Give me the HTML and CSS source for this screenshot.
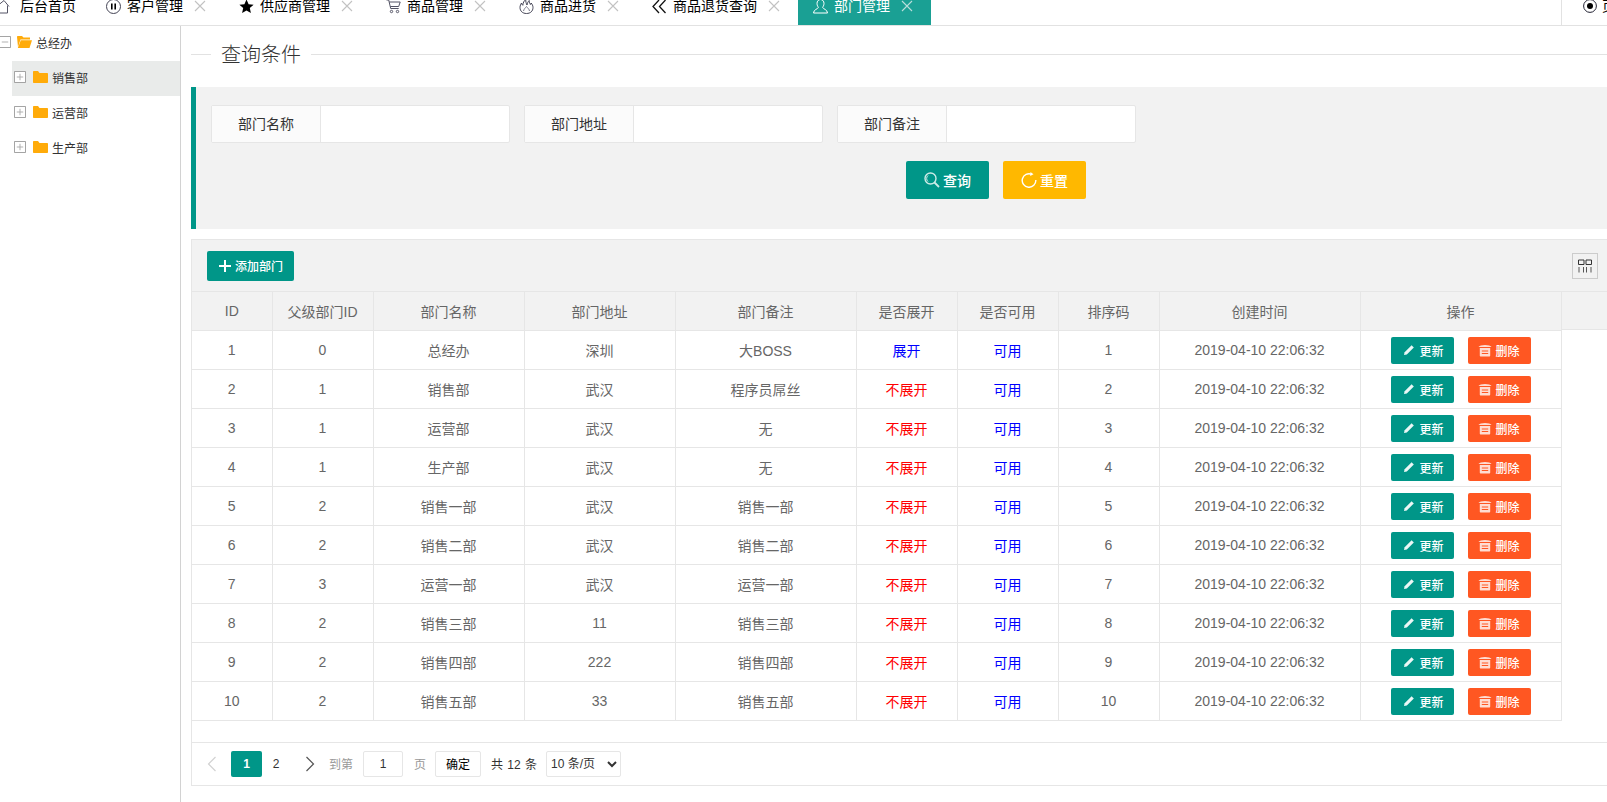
FILE: index.html
```html
<!DOCTYPE html>
<html lang="zh-CN">
<head>
<meta charset="utf-8">
<title>部门管理</title>
<link rel="stylesheet" href="styles.css">
</head>
<body>
<svg class="defs" width="0" height="0">
  <symbol id="i-x" viewBox="0 0 16 16"><path d="M3 3l10 10M13 3L3 13" fill="none" stroke="currentColor" stroke-width="1.1"/></symbol>
  <symbol id="i-edit" viewBox="0 0 12 12"><path d="M1 11l.6-2.800L8.600 1.200l2.200 2.200-7 7z" fill="currentColor" opacity=".92"/></symbol>
  <symbol id="i-trash" viewBox="0 0 14 14"><path d="M.5 4C1.500 1.300 12.500 1.300 13.500 4z" fill="currentColor" opacity=".8"/><path d="M1.800 5h10.400v7.500c0 .6-.4 1-1 1H2.800c-.6 0-1-.4-1-1zM3.800 7.500v1h6.400v-1zM3.800 10v1h6.400v-1z" fill="currentColor" fill-rule="evenodd" opacity=".8"/></symbol>
  <symbol id="i-folder" viewBox="0 0 15 12"><path d="M0 1c0-.6.4-1 1-1h4l1.500 2H14c.6 0 1 .4 1 1v8c0 .6-.4 1-1 1H1c-.6 0-1-.4-1-1z" fill="#ffab0a"/></symbol>
  <symbol id="i-plus" viewBox="0 0 13 13"><path d="M.5.500h12v12H.5z" fill="#fff" stroke="#999"/><path d="M3 6.500h7M6.500 3v7" stroke="#aaa"/></symbol>
</svg>

<header class="tabs">
  <nav class="tab-list">
    <a class="tab tab-home"><svg class="tab-icon" viewBox="0 0 15 14"><path d="M1 7.500L9 1l5 6M3.500 6v7.500h9V6" fill="none" stroke="#556"/></svg><span>后台首页</span></a>
    <a class="tab"><svg class="tab-icon" viewBox="0 0 15 15"><circle cx="7.500" cy="7.500" r="7" fill="none" stroke="#445"/><path d="M5.800 4.500v6M9.200 4.500v6" stroke="#000" stroke-width="1.600"/></svg><span>客户管理</span><svg class="tab-x"><use href="#i-x"/></svg></a>
    <a class="tab"><svg class="tab-icon" viewBox="0 0 15 15"><path d="M7.500.500l2.100 4.700 5 .5-3.800 3.400 1.100 5-4.400-2.600-4.400 2.600 1.100-5L.400 5.700l5-.5z" fill="#000"/></svg><span>供应商管理</span><svg class="tab-x"><use href="#i-x"/></svg></a>
    <a class="tab"><svg class="tab-icon" viewBox="0 0 15 15"><path d="M.5 1h2.200l2 8.500h8M3.200 3h11l-1.500 4.500H4.300" fill="none" stroke="#556"/><circle cx="5.500" cy="12.500" r="1.200" fill="none" stroke="#556"/><circle cx="11.500" cy="12.500" r="1.200" fill="none" stroke="#556"/></svg><span>商品管理</span><svg class="tab-x"><use href="#i-x"/></svg></a>
    <a class="tab"><svg class="tab-icon" viewBox="0 0 15 15"><path d="M7.500 14.500C3.500 14.500 1 12 1 8.500c0-2 .8-3 1.500-4.500.3 1 .6 1.800 1.300 2.300C4 4 5 1.500 6.800.5c-.2 2 .4 4 1.200 5.500.2-1.500.8-3 2.200-4.500 0 2 .6 2.800 1.200 4 .2-.5.4-1 .8-1.500 1 1.500 1.800 2.700 1.800 4.500 0 3.500-2.500 6-6.500 6z" fill="none" stroke="#445"/><path d="M4.500 12c.5-2 1.800-3.200 3-4.500 1 1.500 2.800 2.500 3 4.500" fill="none" stroke="#778"/></svg><span>商品进货</span><svg class="tab-x"><use href="#i-x"/></svg></a>
    <a class="tab"><svg class="tab-icon" viewBox="0 0 15 15"><path d="M7 1L1 7.500 7 14M13.500 1l-6 6.500 6 6.500" fill="none" stroke="#111" stroke-width="1.300"/></svg><span>商品退货查询</span><svg class="tab-x"><use href="#i-x"/></svg></a>
    <a class="tab tab-active"><svg class="tab-icon" viewBox="0 0 15 15"><path d="M7.500.5c2.200 0 3.500 1.700 3.500 4 0 2-1 3-1.300 4 .3 1.500 4.800 2 4.800 5.500H.5c0-3.500 4.500-4 4.800-5.500C5 7.500 4 6.500 4 4.500c0-2.300 1.300-4 3.500-4z" fill="none" stroke="#fff"/></svg><span>部门管理</span><svg class="tab-x"><use href="#i-x"/></svg></a>
  </nav>
  <div class="tab-tools"><svg class="tool-icon" viewBox="0 0 14 14"><circle cx="7" cy="7" r="6.400" fill="none" stroke="#223"/><circle cx="7" cy="7" r="3" fill="#000"/></svg><span>页面操作</span></div>
</header>

<div class="layout">
  <aside class="tree">
    <div class="tree-row tree-root">
      <svg class="tree-toggle" viewBox="0 0 13 13"><path d="M.5.500h12v12H.5z" fill="#fff" stroke="#999"/><path d="M3 6.500h7" stroke="#aaa"/></svg>
      <svg class="tree-folder" viewBox="0 0 15 12"><path d="M0 1c0-.6.4-1 1-1h4l1.500 1.500H13v2H3.500L1 11z" fill="#ffab0a"/><path d="M3.800 4.300H15L12.500 12H.8z" fill="#ffab0a"/></svg>
      <span>总经办</span>
    </div>
    <div class="tree-row tree-child tree-selected"><svg class="tree-toggle"><use href="#i-plus"/></svg><svg class="tree-folder"><use href="#i-folder"/></svg><span>销售部</span></div>
    <div class="tree-row tree-child"><svg class="tree-toggle"><use href="#i-plus"/></svg><svg class="tree-folder"><use href="#i-folder"/></svg><span>运营部</span></div>
    <div class="tree-row tree-child"><svg class="tree-toggle"><use href="#i-plus"/></svg><svg class="tree-folder"><use href="#i-folder"/></svg><span>生产部</span></div>
  </aside>

  <main class="content">
    <div class="legend-row"><h2 class="legend">查询条件</h2></div>

    <section class="query">
      <div class="query-fields">
        <div class="field"><label class="field-label">部门名称</label><input class="field-input" type="text"></div>
        <div class="field"><label class="field-label">部门地址</label><input class="field-input" type="text"></div>
        <div class="field"><label class="field-label">部门备注</label><input class="field-input" type="text"></div>
      </div>
      <div class="query-actions">
        <button class="btn btn-green"><svg class="btn-icon" viewBox="0 0 16 16"><circle cx="6.500" cy="6.500" r="5.500" fill="none" stroke="#cdebe7" stroke-width="1.400"/><path d="M4 3.500a4 4 0 0 0 0 6" fill="none" stroke="#cdebe7"/><path d="M10.500 10.500l4.500 4.500" stroke="#cdebe7" stroke-width="1.800"/></svg>查询</button>
        <button class="btn btn-yellow"><svg class="btn-icon" viewBox="0 0 16 16"><path d="M10.800 2.300A6.800 6.800 0 1 0 14.800 8" fill="none" stroke="#fff" stroke-width="1.400"/><path d="M9.500 0l3 2.300-3.300 1.700z" fill="#fff"/></svg>重置</button>
      </div>
    </section>

    <section class="grid">
      <div class="grid-toolbar">
        <button class="btn-add"><svg class="add-icon" viewBox="0 0 12 12"><path d="M6 0v12M0 6h12" stroke="#fff" stroke-width="2"/></svg>添加部门</button>
        <button class="btn-cols"><svg viewBox="0 0 14 14" width="14" height="14"><path d="M.5 1h5.500v4.500H.5zM8 1h5.500v4.500H8z" fill="none" stroke="#333"/><path d="M1 8v5.500M5.500 8v5.500M8.500 8v5.500M13 8v5.500" stroke="#555"/></svg></button>
      </div>
      <div class="table-wrap">
        <table class="data">
          <colgroup><col class="c-id"><col class="c-pid"><col class="c-name"><col class="c-addr"><col class="c-note"><col class="c-flag"><col class="c-flag"><col class="c-flag"><col class="c-time"><col class="c-ops"></colgroup>
          <thead><tr><th>ID</th><th>父级部门ID</th><th>部门名称</th><th>部门地址</th><th>部门备注</th><th>是否展开</th><th>是否可用</th><th>排序码</th><th>创建时间</th><th>操作</th></tr></thead>
          <tbody>
            <tr><td>1</td><td>0</td><td>总经办</td><td>深圳</td><td>大BOSS</td><td class="blue">展开</td><td class="blue">可用</td><td>1</td><td>2019-04-10 22:06:32</td><td class="ops"><button class="mini mini-green"><svg class="mini-icon"><use href="#i-edit"/></svg>更新</button><button class="mini mini-red"><svg class="mini-icon"><use href="#i-trash"/></svg>删除</button></td></tr>
            <tr><td>2</td><td>1</td><td>销售部</td><td>武汉</td><td>程序员屌丝</td><td class="red">不展开</td><td class="blue">可用</td><td>2</td><td>2019-04-10 22:06:32</td><td class="ops"><button class="mini mini-green"><svg class="mini-icon"><use href="#i-edit"/></svg>更新</button><button class="mini mini-red"><svg class="mini-icon"><use href="#i-trash"/></svg>删除</button></td></tr>
            <tr><td>3</td><td>1</td><td>运营部</td><td>武汉</td><td>无</td><td class="red">不展开</td><td class="blue">可用</td><td>3</td><td>2019-04-10 22:06:32</td><td class="ops"><button class="mini mini-green"><svg class="mini-icon"><use href="#i-edit"/></svg>更新</button><button class="mini mini-red"><svg class="mini-icon"><use href="#i-trash"/></svg>删除</button></td></tr>
            <tr><td>4</td><td>1</td><td>生产部</td><td>武汉</td><td>无</td><td class="red">不展开</td><td class="blue">可用</td><td>4</td><td>2019-04-10 22:06:32</td><td class="ops"><button class="mini mini-green"><svg class="mini-icon"><use href="#i-edit"/></svg>更新</button><button class="mini mini-red"><svg class="mini-icon"><use href="#i-trash"/></svg>删除</button></td></tr>
            <tr><td>5</td><td>2</td><td>销售一部</td><td>武汉</td><td>销售一部</td><td class="red">不展开</td><td class="blue">可用</td><td>5</td><td>2019-04-10 22:06:32</td><td class="ops"><button class="mini mini-green"><svg class="mini-icon"><use href="#i-edit"/></svg>更新</button><button class="mini mini-red"><svg class="mini-icon"><use href="#i-trash"/></svg>删除</button></td></tr>
            <tr><td>6</td><td>2</td><td>销售二部</td><td>武汉</td><td>销售二部</td><td class="red">不展开</td><td class="blue">可用</td><td>6</td><td>2019-04-10 22:06:32</td><td class="ops"><button class="mini mini-green"><svg class="mini-icon"><use href="#i-edit"/></svg>更新</button><button class="mini mini-red"><svg class="mini-icon"><use href="#i-trash"/></svg>删除</button></td></tr>
            <tr><td>7</td><td>3</td><td>运营一部</td><td>武汉</td><td>运营一部</td><td class="red">不展开</td><td class="blue">可用</td><td>7</td><td>2019-04-10 22:06:32</td><td class="ops"><button class="mini mini-green"><svg class="mini-icon"><use href="#i-edit"/></svg>更新</button><button class="mini mini-red"><svg class="mini-icon"><use href="#i-trash"/></svg>删除</button></td></tr>
            <tr><td>8</td><td>2</td><td>销售三部</td><td>11</td><td>销售三部</td><td class="red">不展开</td><td class="blue">可用</td><td>8</td><td>2019-04-10 22:06:32</td><td class="ops"><button class="mini mini-green"><svg class="mini-icon"><use href="#i-edit"/></svg>更新</button><button class="mini mini-red"><svg class="mini-icon"><use href="#i-trash"/></svg>删除</button></td></tr>
            <tr><td>9</td><td>2</td><td>销售四部</td><td>222</td><td>销售四部</td><td class="red">不展开</td><td class="blue">可用</td><td>9</td><td>2019-04-10 22:06:32</td><td class="ops"><button class="mini mini-green"><svg class="mini-icon"><use href="#i-edit"/></svg>更新</button><button class="mini mini-red"><svg class="mini-icon"><use href="#i-trash"/></svg>删除</button></td></tr>
            <tr><td>10</td><td>2</td><td>销售五部</td><td>33</td><td>销售五部</td><td class="red">不展开</td><td class="blue">可用</td><td>10</td><td>2019-04-10 22:06:32</td><td class="ops"><button class="mini mini-green"><svg class="mini-icon"><use href="#i-edit"/></svg>更新</button><button class="mini mini-red"><svg class="mini-icon"><use href="#i-trash"/></svg>删除</button></td></tr>
          </tbody>
        </table>
        <div class="head-patch"></div>
      </div>
      <div class="pager">
        <svg class="pg-arrow" viewBox="0 0 10 16"><path d="M8.500 1L1.500 8l7 7" fill="none" stroke="#d2d2d2" stroke-width="1.200"/></svg>
        <span class="pg-cur">1</span>
        <span class="pg-num">2</span>
        <svg class="pg-arrow pg-next" viewBox="0 0 10 16"><path d="M1.500 1l7 7-7 7" fill="none" stroke="#555" stroke-width="1.200"/></svg>
        <span class="pg-muted">到第</span>
        <input class="pg-input" type="text" value="1">
        <span class="pg-muted pg-page">页</span>
        <button class="pg-ok">确定</button>
        <span class="pg-total">共 12 条</span>
        <select class="pg-size"><option>10 条/页</option></select>
      </div>
    </section>
  </main>
</div>
</body>
</html>
```
FILE: styles.css
```css
* { box-sizing: border-box; }
html, body { margin: 0; height: 100%; overflow: hidden; }
body {
  background: #fff;
  color: #666;
  font-family: "Liberation Sans", "Noto Sans CJK SC", sans-serif;
  font-size: 14px;
}
.defs { display: block; height: 0; }
button { font-family: inherit; cursor: pointer; }

/* tab strip */
.tabs {
  display: flex;
  height: 26px;
  border-bottom: 1px solid #e2e2e2;
  overflow: hidden;
}
.tab-list { display: flex; flex: 1; margin-left: -16px; min-width: 0; }
.tab {
  display: flex;
  align-items: center;
  height: 25px;
  padding: 0 16px 13px 15px;
  color: #000;
  line-height: 12px;
  white-space: nowrap;
}
.tab-icon { width: 15px; height: 15px; margin-right: 6px; flex: none; }
.tab-x { width: 16px; height: 16px; margin-left: 9px; color: #c2c2c2; flex: none; }
.tab-home { padding: 0 15px 13px 11px; }
.tab-home .tab-icon { margin-right: 10px; }
.tab-active { background: #1aa094; color: #fff; }
.tab-active .tab-x { color: #b9dedb; }
.tab-tools {
  display: flex;
  width: 46px;
  flex: none;
  height: 25px;
  align-items: center;
  padding: 0 0 13px 21px;
  border-left: 1px solid #e2e2e2;
  color: #000;
  line-height: 12px;
  white-space: nowrap;
  overflow: hidden;
}
.tool-icon { width: 14px; height: 14px; margin-right: 5px; flex: none; }

/* layout */
.layout { display: flex; height: 776px; }
.tree {
  width: 181px;
  flex: none;
  border-right: 1px solid #d2d2d2;
  font-size: 12px;
  color: #333;
}
.tree-row { display: flex; align-items: center; height: 35px; }
.tree-child { margin-left: 12px; padding-left: 2px; }
.tree-selected { background: #e9ebea; }
.tree-toggle { width: 12px; height: 12px; flex: none; margin-bottom: 3px; }
.tree-folder { width: 15px; height: 12px; margin: 0 4px 3px 7px; flex: none; }
.tree-root .tree-toggle { margin-left: -1px; }
.tree-root .tree-folder { margin: 0 4px 3px 6px; }
.tree-row span { margin-bottom: 2px; }

.content { flex: 1; min-width: 0; padding-left: 10px; }

/* legend */
.legend-row {
  display: flex;
  height: 61px;
  align-items: flex-start;
  padding-top: 16px;
  padding-left: 20px;
  position: relative;
}
.legend-row::before {
  content: "";
  position: absolute;
  left: 0; right: 0; top: 28px;
  border-top: 1px solid #e2e2e2;
}
.legend {
  position: relative;
  margin: 0;
  padding: 0 10px;
  background: #fff;
  color: #333;
  font-size: 20px;
  font-weight: 300;
  line-height: 26px;
}

/* query block */
.query {
  height: 142px;
  padding: 18px 0 0 15px;
  background: #f2f2f2;
  border-left: 5px solid #009688;
}
.query-fields { display: flex; gap: 14px; }
.field {
  display: flex;
  width: 299px;
  height: 38px;
  background: #fff;
  border: 1px solid #e6e6e6;
  border-radius: 2px;
}
.field-label {
  width: 109px;
  flex: none;
  background: #fbfbfb;
  border-right: 1px solid #e6e6e6;
  color: #333;
  text-align: center;
  line-height: 36px;
}
.field-input { flex: 1; min-width: 0; border: 0; background: transparent; }
.query-actions { display: flex; gap: 14px; margin: 18px 0 0 695px; }
.btn {
  display: flex;
  align-items: center;
  justify-content: center;
  width: 83px;
  height: 38px;
  padding: 0;
  border: 0;
  border-radius: 2px;
  color: #fff;
  font-size: 14px;
  font-weight: 500;
}
.btn-icon { width: 16px; height: 16px; margin-right: 3px; }
.btn-green { background: #009688; }
.btn-yellow { background: #ffb800; }

/* data grid */
.grid {
  height: 547px;
  margin-top: 10px;
  border: 1px solid #e6e6e6;
  border-right: 0;
}
.grid-toolbar {
  display: flex;
  align-items: center;
  justify-content: space-between;
  height: 51px;
  padding: 0 9px 0 15px;
  background: #f2f2f2;
}
.btn-add {
  display: flex;
  align-items: center;
  height: 30px;
  width: 87px;
  padding: 0 0 0 12px;
  background: #009688;
  border: 0;
  border-radius: 2px;
  color: #fff;
  font-size: 12px;
  font-weight: 500;
  white-space: nowrap;
}
.add-icon { width: 12px; height: 12px; margin-right: 4px; }
.btn-cols {
  display: flex;
  align-items: center;
  justify-content: center;
  width: 26px;
  height: 26px;
  padding: 0;
  background: transparent;
  border: 1px solid #ccc;
}
.table-wrap { position: relative; height: 452px; border-bottom: 1px solid #e6e6e6; }
.data {
  width: 1369px;
  margin: 0;
  border-collapse: collapse;
  table-layout: fixed;
  position: relative;
  z-index: 1;
}
.c-id { width: 80px; }
.c-pid { width: 101px; }
.c-name, .c-addr { width: 151px; }
.c-note { width: 181px; }
.c-flag { width: 101px; }
.c-time, .c-ops { width: 201px; }
.data th, .data td {
  height: 39px;
  padding: 0;
  border: 1px solid #e6e6e6;
  text-align: center;
  font-weight: 400;
}
.data th:first-child, .data td:first-child { border-left: 0; }
.data th { background: #f2f2f2; }
.data .blue { color: #00f; }
.data .red { color: #f00; }
.head-patch {
  position: absolute;
  left: 0; right: 0; top: 0;
  height: 39px;
  background: #f2f2f2;
  border-top: 1px solid #e6e6e6;
  border-bottom: 1px solid #e6e6e6;
}
.ops { font-size: 0; }
.mini {
  display: inline-flex;
  align-items: center;
  justify-content: center;
  width: 63px;
  height: 27px;
  padding: 0;
  border: 0;
  border-radius: 2px;
  color: #fff;
  font-size: 12px;
  font-weight: 500;
  vertical-align: middle;
}
.mini + .mini { margin-left: 14px; }
.mini-green { background: #009688; padding-left: 3px; }
.mini-red { background: #ff5722; }
.mini-icon { width: 12px; height: 12px; margin-right: 4px; }
.mini-red .mini-icon { width: 14px; height: 14px; margin-right: 3px; }

/* pager */
.pager {
  display: flex;
  align-items: center;
  height: 41px;
  padding-left: 15px;
  font-size: 12px;
  color: #333;
}
.pg-arrow { width: 10px; height: 16px; flex: none; }
.pg-cur {
  width: 31px;
  height: 26px;
  margin-left: 14px;
  background: #009688;
  border-radius: 2px;
  color: #fff;
  font-weight: 700;
  text-align: center;
  line-height: 26px;
}
.pg-num { width: 28px; text-align: center; }
.pg-next { margin-left: 15px; }
.pg-muted { color: #999; margin-left: 14px; }
.pg-input {
  width: 40px;
  height: 26px;
  margin-left: 10px;
  border: 1px solid #e6e6e6;
  border-radius: 2px;
  background: #fff;
  color: #333;
  font: inherit;
  text-align: center;
}
.pg-page { margin-left: 11px; }
.pg-ok {
  width: 46px;
  height: 26px;
  margin-left: 9px;
  padding: 0;
  background: #fff;
  border: 1px solid #e6e6e6;
  border-radius: 2px;
  color: #000;
  font-size: 12px;
}
.pg-total { margin-left: 10px; color: #333; word-spacing: 1px; }
.pg-size {
  width: 75px;
  height: 26px;
  margin-left: 9px;
  background: #fff;
  border: 1px solid #e6e6e6;
  border-radius: 2px;
  color: #333;
  font: inherit;
}
```
